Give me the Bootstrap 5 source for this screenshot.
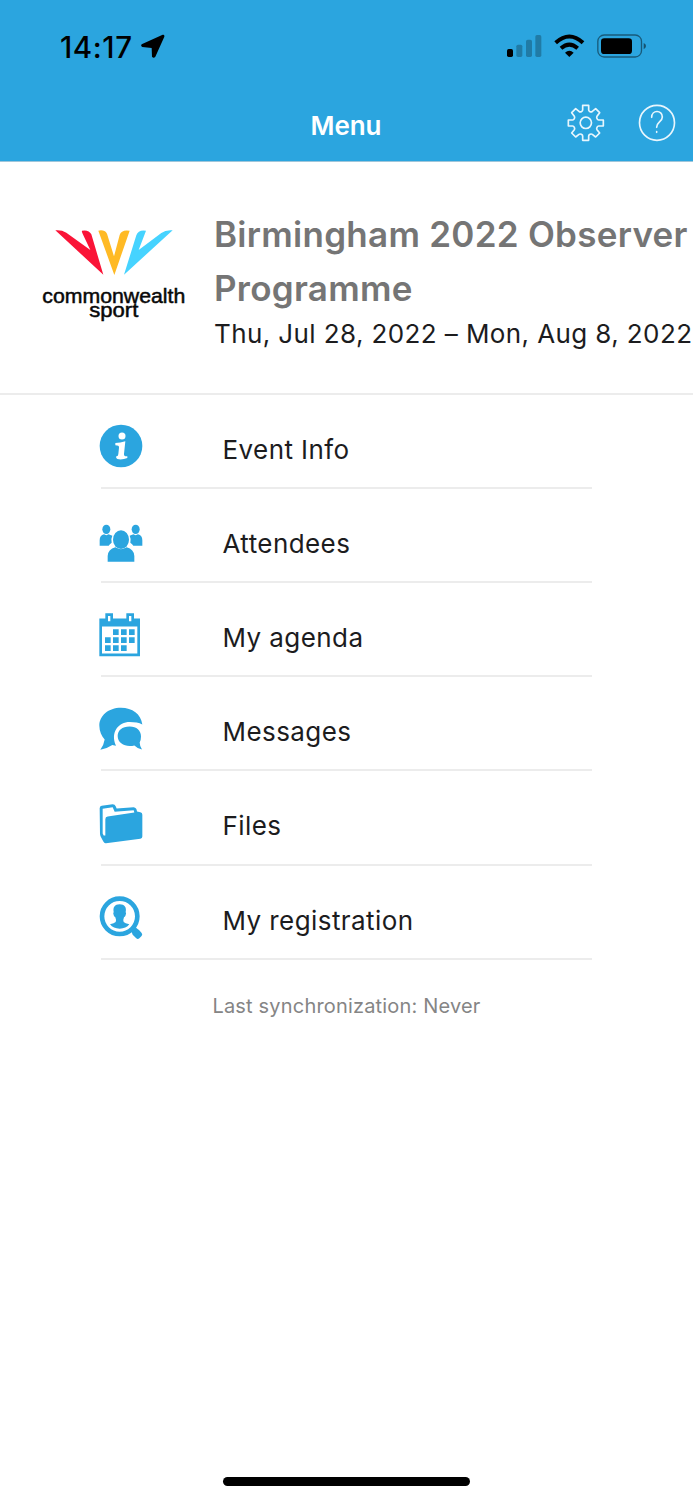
<!DOCTYPE html>
<html lang="en">
<head>
<meta charset="utf-8">
<meta name="viewport" content="width=device-width, initial-scale=1">
<title>Menu</title>
<link href="https://cdn.jsdelivr.net/npm/bootstrap@5.3.0/dist/css/bootstrap.min.css" rel="stylesheet">
<style>
:root{--brand:#2ba5df}
body{font-family:Inter,"Liberation Sans",sans-serif;color:#1c1c1e;background:#fff}
.screen{height:1500px}
.app-top{background:var(--brand);height:162px;border-bottom:1px solid #9fc6da}
.status{height:90px;padding:3px 46px 0 60px;color:#000}
.clock{font-size:29.5px;font-weight:500;line-height:34px;letter-spacing:.6px}
.title-bar{height:71px;padding-right:17px}
.bar-title{font-size:26px;font-weight:600;line-height:32px;letter-spacing:-.1px;padding-top:1px;margin-left:16px}
.bar-icons{margin-top:-5px}
.event{height:232.6px;border-bottom:2px solid #ececec;padding:46px 0 0 30px}
.event-logo{width:184px;padding-top:7px}
.event-name{font-size:35px;font-weight:600;line-height:53.5px;letter-spacing:.27px;color:#757575}
.event-date{font-size:26px;line-height:38px;letter-spacing:.4px}
.menu-list{width:491px;margin-left:101px}
.menu-row{height:94.2px;border-bottom:2px solid #ececec;color:#1c1c1e}
.menu-icon{width:65px;height:65px;margin:20px 0 0 -11px;fill:var(--brand)}
.menu-text{font-size:26px;line-height:32px;letter-spacing:.42px;margin:39px 0 0 67.5px}
.sync{font-size:20px;line-height:24px;letter-spacing:.18px;color:#858585;margin-top:34.5px}
.home-bar{width:247px;height:9px;background:#000;margin-bottom:14px}
</style>
<script src="https://cdn.jsdelivr.net/npm/bootstrap@5.3.0/dist/js/bootstrap.bundle.min.js"></script>
</head>
<body>
<div class="screen d-flex flex-column overflow-hidden">
<header class="app-top flex-shrink-0">
  <div class="status d-flex align-items-center justify-content-between">
    <div class="d-flex align-items-center">
      <span class="clock">14:17</span>
      <svg class="ms-2" width="24" height="25" viewBox="303 43 72 75"><path d="M368 45Q374 44 373 51L346 111Q341 117 336 111L335 85L307 82Q301 79 305 74Z"/></svg>
    </div>
    <svg width="141" height="26" viewBox="48 42 423 78">
      <rect x="51" y="87" width="18" height="24" rx="5"/>
      <g opacity=".25"><rect x="79" y="74" width="18" height="37" rx="5"/><rect x="108" y="59" width="18" height="52" rx="5"/><rect x="136" y="45" width="18" height="66" rx="5"/></g>
      <g fill="none" stroke="#000" stroke-width="12"><path d="M197 68Q238 31 279 68"/><path d="M213 85Q238 63 263 85"/></g>
      <path d="M225 98Q238 86 251 98L238 111Z"/>
      <rect x="323.500" y="45" width="131" height="66" rx="19" fill="none" stroke="#000" stroke-opacity=".45" stroke-width="4"/>
      <rect x="333" y="55" width="93" height="47" rx="10"/>
      <path d="M461 69Q468 72 468 78T461 88Z" opacity=".5"/>
    </svg>
  </div>
  <nav class="title-bar row g-0 align-items-center">
    <div class="col"></div>
    <div class="col-auto"><h1 class="bar-title text-white mb-0">Menu</h1></div>
    <div class="col d-flex justify-content-end">
      <svg class="bar-icons" width="109" height="38" viewBox="52 42 327 114" fill="none" stroke="#e8f6fd" stroke-width="5" stroke-linejoin="round" stroke-linecap="round">
        <path d="M99 46H117V60Q117 63 121 65Q125 67 128 64L138 56L150 68L142 79Q140 82 142 86Q144 90 147 90H161V108H147Q144 108 142 112Q140 116 142 119L150 129L138 141L128 133Q125 131 121 133Q117 135 117 138V151H99V138Q99 135 95 133Q91 131 88 133L78 141L66 129L74 119Q76 116 74 112Q72 108 69 108H56V90H69Q72 90 74 86Q76 82 74 79L66 68L78 56L88 64Q91 67 95 65Q99 63 99 60Z"/>
        <circle cx="108.500" cy="98.500" r="17"/>
        <circle cx="322" cy="98.500" r="52.500"/>
        <path d="M306 82C306 59 338 59 338 81C338 95 321 95 321 112M321 125V127"/>
      </svg>
    </div>
  </nav>
</header>
<section class="event d-flex flex-shrink-0">
  <div class="event-logo flex-shrink-0">
    <svg width="170" height="120" viewBox="0 0 510 360">
      <path fill="#fa1437" d="M76 46Q94 44 109 53L181 105L160 61Q154 49 156 47Q176 43 184 58L220 179Z"/>
      <path fill="#ffba25" d="M205 47Q223 43 231 56L252 124L269 60Q274 43 299 47L253 180Z"/>
      <path fill="#46d3ff" d="M282 179L319 61Q325 43 348 47L326 105L394 54Q407 44 428 46Z"/>
      <g fill="#080808" font-family="'Liberation Sans',Arial,sans-serif" font-size="62" stroke="#080808" stroke-width="1.500">
        <text x="37" y="264" textLength="429" lengthAdjust="spacingAndGlyphs">commonwealth</text>
        <text x="178" y="307" textLength="147" lengthAdjust="spacingAndGlyphs">sport</text>
      </g>
    </svg>
  </div>
  <div class="text-nowrap">
    <h2 class="event-name m-0">Birmingham 2022 Observer<br>Programme</h2>
    <div class="event-date">Thu, Jul 28, 2022 – Mon, Aug 8, 2022</div>
  </div>
</section>
<nav class="menu-list">
  <a class="menu-row d-flex align-items-start text-decoration-none" href="#">
    <svg class="menu-icon" viewBox="0 0 195 195"><circle cx="93" cy="93" r="64"/><g fill="#fff"><circle cx="96" cy="63" r="10.500"/><path d="M76 84Q91 84 106 79L102 117Q101 125 112 124V129Q100 134 87 133Q76 132 79 124Q85 124 85 117L87 98Q88 91 76 91Z"/></g></svg>
    <span class="menu-text">Event Info</span></a>
  <a class="menu-row d-flex align-items-start text-decoration-none" href="#">
    <svg class="menu-icon" viewBox="0 -3 195 195"><ellipse cx="49" cy="58" rx="12" ry="14"/><ellipse cx="137" cy="58" rx="12" ry="14"/><path d="M29 107V91Q29 76 42 73Q49 78 56 73L67 77Q62 87 65 98Q59 102 56 107ZM157 107V91Q157 76 144 73Q137 78 130 73L119 77Q124 87 121 98Q127 102 130 107Z"/><ellipse cx="93" cy="89" rx="24" ry="28"/><path d="M53 155V138Q54 118 76 112Q93 123 110 112Q132 118 133 138V155Z"/></svg>
    <span class="menu-text">Attendees</span></a>
  <a class="menu-row d-flex align-items-start text-decoration-none" href="#">
    <svg class="menu-icon" viewBox="0 8.200 195 195"><path fill-rule="evenodd" d="M28 55H46V39H69V55H109V39H132V55H150V168H28ZM36 79V160H142V79ZM54 47V63H61V47ZM117 47V63H124V47Z"/><path d="M69 87h17v17h-17zM93 87h17v17h-17zM117 87h17v17h-17zM45 111h17v17h-17zM69 111h17v17h-17zM93 111h17v17h-17zM117 111h17v17h-17zM45 135h17v17h-17zM69 135h17v17h-17zM93 135h17v17h-17z"/></svg>
    <span class="menu-text">My agenda</span></a>
  <a class="menu-row d-flex align-items-start text-decoration-none" href="#">
    <svg class="menu-icon" viewBox="0 4.800 195 195"><path d="M157 87C153 56 127 37 93 37C55 37 28 61 28 91C28 108 35 122 44 132Q42 147 31 163Q51 160 67 149L78 151C60 111 86 80 119 80Q142 80 157 87Z"/><path d="M119 93C96 93 83 105 83 122C83 141 100 152 119 152Q127 152 133 150Q143 160 156 162Q149 151 149 141Q153 134 153 123C153 105 140 93 119 93Z"/></svg>
    <span class="menu-text">Messages</span></a>
  <a class="menu-row d-flex align-items-start text-decoration-none" href="#">
    <svg class="menu-icon" viewBox="0 2.400 195 195"><path fill-rule="evenodd" d="M29 54Q29 48 35 47L68 42Q75 42 77 48L80 55L131 51Q140 52 141 64L151 66Q157 67 157 74V139Q157 145 151 146L48 159Q43 160 40 154L32 139Q30 135 30 130ZM38 56V130L41 136H46V87Q46 80 53 79L133 67L131 60L74 65L68 51Z"/></svg>
    <span class="menu-text">Files</span></a>
  <a class="menu-row d-flex align-items-start text-decoration-none" href="#">
    <svg class="menu-icon" viewBox="0 1 195 195"><circle cx="89" cy="92" r="53" fill="none" stroke="#2ba5df" stroke-width="14"/><path d="M122 137L136 124Q142 130 147 133L155 142Q159 147 154 152L148 158Q143 162 138 157L128 147Q126 140 122 137Z"/><path d="M89 56C74 56 68 66 71 79Q68 82 72 91Q74 94 76 95Q80 105 77 109Q73 113 60 116Q70 129 89 129T118 116Q105 113 101 109Q98 105 102 95Q104 94 106 91Q110 82 107 79C110 66 104 56 89 56Z"/></svg>
    <span class="menu-text">My registration</span></a>
</nav>
<div class="sync text-center">Last synchronization: Never</div>
<div class="home-bar rounded-pill mx-auto mt-auto flex-shrink-0"></div>
</div>
</body>
</html>
